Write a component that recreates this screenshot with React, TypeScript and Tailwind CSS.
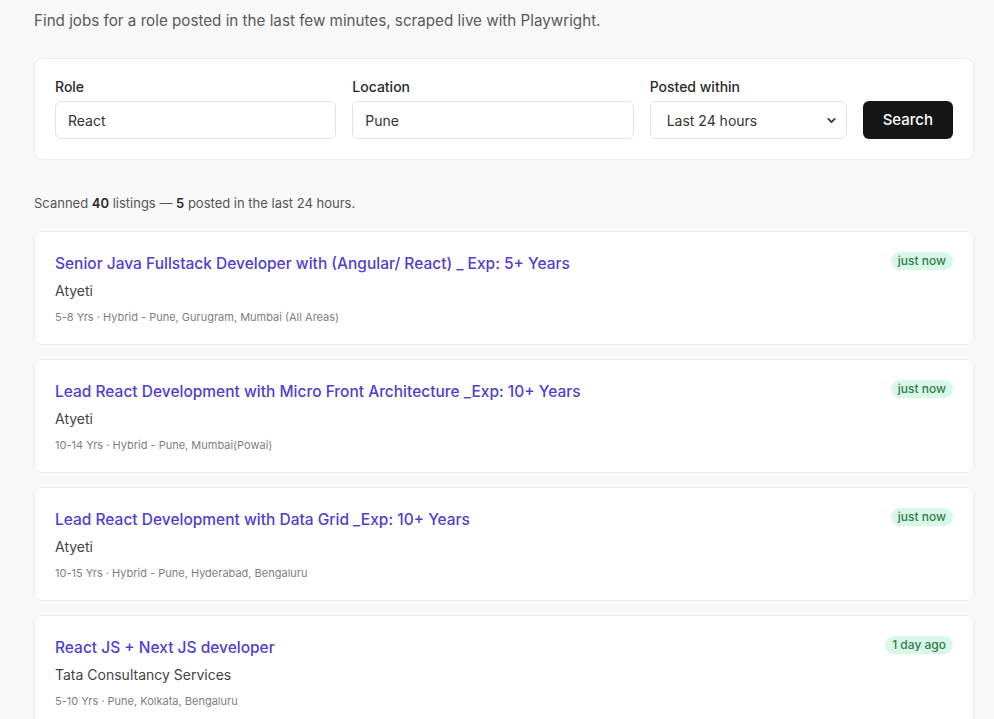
import React from 'react';
import { ChevronDown } from 'lucide-react';

type Job = {
  title: string;
  company: string;
  meta: string;
  posted: string;
};

const jobs: Job[] = [
  {
    title: 'Senior Java Fullstack Developer with (Angular/ React) _ Exp: 5+ Years',
    company: 'Atyeti',
    meta: '5-8 Yrs · Hybrid - Pune, Gurugram, Mumbai (All Areas)',
    posted: 'just now',
  },
  {
    title: 'Lead React Development with Micro Front Architecture _Exp: 10+ Years',
    company: 'Atyeti',
    meta: '10-14 Yrs · Hybrid - Pune, Mumbai(Powai)',
    posted: 'just now',
  },
  {
    title: 'Lead React Development with Data Grid _Exp: 10+ Years',
    company: 'Atyeti',
    meta: '10-15 Yrs · Hybrid - Pune, Hyderabad, Bengaluru',
    posted: 'just now',
  },
  {
    title: 'React JS + Next JS developer',
    company: 'Tata Consultancy Services',
    meta: '5-10 Yrs · Pune, Kolkata, Bengaluru',
    posted: '1 day ago',
  },
];

const JobCard: React.FC<{ job: Job }> = ({ job }) => (
  <div className="bg-white border border-[#ececec] rounded-lg px-5 pt-[21px] pb-[17px] flex items-start justify-between">
    <div className="flex flex-col">
      <a href="#" className="text-[15.5px] leading-[22px] font-medium text-[#4f3fd0]">
        {job.title}
      </a>
      <div className="mt-[6px] text-[14px] leading-5 text-[#444]">{job.company}</div>
      <div className="mt-[6px] text-[11px] leading-5 text-[#808080]">{job.meta}</div>
    </div>
    <span className="shrink-0 -mt-px bg-[#d9f7e6] text-[#2f7a52] text-[12px] leading-[18px] font-medium px-[7px] rounded-full">
      {job.posted}
    </span>
  </div>
);

export default function App() {
  return (
    <div className="min-h-screen bg-[#f8f8f8] text-[#1f1f1f] font-['Inter','Liberation_Sans',sans-serif]">
      <div className="w-[940px] ml-[34px] pt-[11px]">
        <p className="text-[15.2px] leading-5 text-[#5a5a5a]">
          Find jobs for a role posted in the last few minutes, scraped live with Playwright.
        </p>

        <div className="mt-[27px] bg-white border border-[#ececec] rounded-lg px-5 pt-[18px] pb-5 grid grid-cols-[1fr_1fr_197px_auto] gap-x-4 items-end">
          <label className="flex flex-col gap-1">
            <span className="text-[14px] leading-5 font-medium text-[#2a2a2a]">Role</span>
            <input
              defaultValue="React"
              className="h-[38px] border border-[#e3e3e3] rounded-md px-3 text-[14px] text-[#333] outline-none"
            />
          </label>
          <label className="flex flex-col gap-1">
            <span className="text-[14px] leading-5 font-medium text-[#2a2a2a]">Location</span>
            <input
              defaultValue="Pune"
              className="h-[38px] border border-[#e3e3e3] rounded-md px-3 text-[14px] text-[#333] outline-none"
            />
          </label>
          <label className="flex flex-col gap-1">
            <span className="text-[14px] leading-5 font-medium text-[#2a2a2a]">Posted within</span>
            <div className="relative">
              <select
                defaultValue="24h"
                className="appearance-none w-full h-[38px] border border-[#e3e3e3] rounded-md pl-4 pr-8 text-[14px] text-[#333] bg-white outline-none"
              >
                <option value="1h">Last hour</option>
                <option value="24h">Last 24 hours</option>
                <option value="7d">Last 7 days</option>
              </select>
              <ChevronDown
                size={13}
                strokeWidth={3}
                className="absolute right-[9px] top-[13px] text-[#333] pointer-events-none"
              />
            </div>
          </label>
          <button className="h-[38px] px-5 bg-[#161616] text-white text-[15px] font-medium rounded-md">
            Search
          </button>
        </div>

        <p className="mt-[33px] text-[13px] leading-5 text-[#555]">
          Scanned <b className="font-semibold text-[#2a2a2a]">40</b> listings —{' '}
          <b className="font-semibold text-[#2a2a2a]">5</b> posted in the last 24 hours.
        </p>

        <div className="mt-[18px] flex flex-col gap-[14px]">
          {jobs.map((job, i) => (
            <JobCard key={i} job={job} />
          ))}
        </div>
      </div>
    </div>
  );
}
